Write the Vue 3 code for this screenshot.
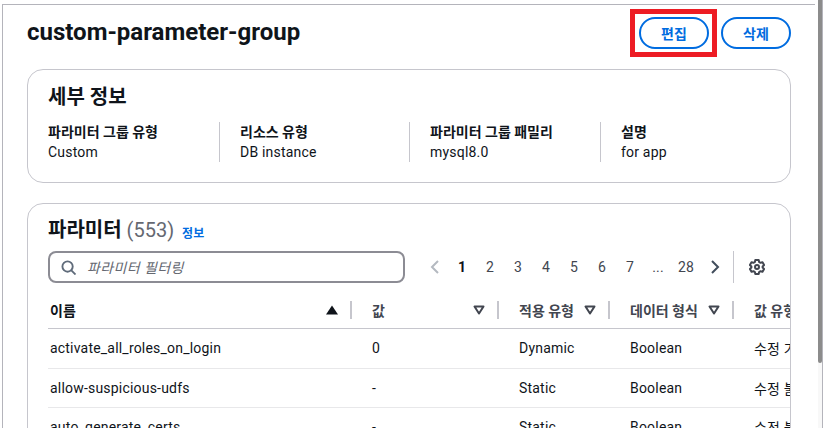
<script setup>
const stats = [
  { label: '파라미터 그룹 유형', value: 'Custom' },
  { label: '리소스 유형', value: 'DB instance' },
  { label: '파라미터 그룹 패밀리', value: 'mysql8.0' },
  { label: '설명', value: 'for app' },
]
const pages = ['2', '3', '4', '5', '6', '7', '...', '28']
const rows = [
  ['activate_all_roles_on_login', '0', 'Dynamic', 'Boolean', '수정 가능'],
  ['allow-suspicious-udfs', '-', 'Static', 'Boolean', '수정 불가'],
  ['auto_generate_certs', '-', 'Static', 'Boolean', '수정 불가'],
]
const cols = [
  { label: '값', cls: 'c2' },
  { label: '적용 유형', cls: 'c3' },
  { label: '데이터 형식', cls: 'c4' },
]
</script>

<template>
  <div class="page">
    <main class="content">
      <header class="head">
        <h1 class="title">custom-parameter-group</h1>
        <div class="actions">
          <button class="btn marked">편집</button>
          <button class="btn">삭제</button>
        </div>
      </header>

      <section class="card details">
        <h2 class="h2">세부 정보</h2>
        <div class="stats">
          <div v-for="s in stats" :key="s.label" class="stat">
            <div class="stat-label">{{ s.label }}</div>
            <div class="stat-value">{{ s.value }}</div>
          </div>
        </div>
      </section>

      <section class="card params">
        <div class="params-head">
          <h2 class="h2 params-title">파라미터 <span class="count">(553)</span></h2>
          <a class="info">정보</a>
        </div>
        <div class="tools">
          <div class="search">
            <svg class="search-icon" viewBox="0 0 16 16" width="15" height="15" fill="none" stroke="#5f6b7a" stroke-width="2">
              <circle cx="7" cy="7" r="5.5" />
              <path d="M10.8 10.8 15.5 15.5" />
            </svg>
            <span class="placeholder">파라미터 필터링</span>
          </div>
          <nav class="pager">
            <svg class="chev" viewBox="0 0 16 16" width="16" height="16" fill="none" stroke="#b4b9c0" stroke-width="2"><path d="M11 2 5 8l6 6" /></svg>
            <span class="page-num current">1</span>
            <span v-for="p in pages" :key="p" class="page-num">{{ p }}</span>
            <svg class="chev next" viewBox="0 0 16 16" width="16" height="16" fill="none" stroke="#414d5c" stroke-width="2"><path d="M5 2l6 6-6 6" /></svg>
          </nav>
          <div class="gear-wrap">
            <svg viewBox="0 0 16 16" width="16" height="16" fill="none" stroke="#424650" stroke-width="2" stroke-linejoin="round">
              <path d="M6.3 1h3.4l.4 2 1.4.8 2-.6 1.6 2.8-1.5 1.4v1.2l1.5 1.4-1.6 2.8-2-.6-1.4.8-.4 2H6.3l-.4-2-1.4-.8-2 .6L.9 10l1.5-1.4V7.4L.9 6l1.6-2.8 2 .6 1.4-.8z" />
              <circle cx="8" cy="8" r="2" />
            </svg>
          </div>
        </div>

        <div class="table">
          <div class="tr th-row">
            <div class="th c1">
              <span class="th-name">이름</span>
              <svg class="sort" viewBox="0 0 12 10" width="12" height="10"><path d="M6 .5 12 9.5H0z" fill="#0f141a" /></svg>
            </div>
            <div v-for="c in cols" :key="c.label" class="th" :class="c.cls">
              <span class="th-name muted">{{ c.label }}</span>
              <svg class="sort" viewBox="0 0 12 10" width="12" height="10"><path d="M1.5 1.5h9L6 8.5z" fill="none" stroke="#424650" stroke-width="2" stroke-linejoin="round" /></svg>
            </div>
            <div class="th c5"><span class="th-name muted nowrap">값 유형</span></div>
          </div>
          <div v-for="r in rows" :key="r[0]" class="tr td-row">
            <div class="td c1">{{ r[0] }}</div>
            <div class="td c2">{{ r[1] }}</div>
            <div class="td c3">{{ r[2] }}</div>
            <div class="td c4">{{ r[3] }}</div>
            <div class="td c5 nowrap">{{ r[4] }}</div>
          </div>
        </div>
      </section>
    </main>
    <aside class="scrollbar"><div class="thumb"></div></aside>
  </div>
</template>

<style>
html, body { margin: 0; background: #fff; }
</style>

<style scoped>
* { box-sizing: border-box; }
.page {
  width: 823px;
  height: 428px;
  overflow: hidden;
  display: flex;
  background: #fff;
  font-family: Roboto, "Noto Sans CJK KR", sans-serif;
  font-size: 14px;
  letter-spacing: 0.2px;
  color: #0f141a;
}
.content {
  width: 813px;
  height: 428px;
  margin-top: 4px;
  margin-left: 2px;
  margin-right: 3px;
  padding: 0 24px;
  border-top: 1px solid #b4b4bb;
  border-left: 1px solid #b4b4bb;
  overflow: hidden;
  flex: none;
}
.head {
  height: 64px;
  padding-top: 12px;
  display: flex;
  justify-content: space-between;
  align-items: flex-start;
}
.title { margin: 0; font-size: 24px; line-height: 30px; font-weight: 700; letter-spacing: 0; }
.actions { display: flex; gap: 12px; }
.btn {
  width: 70px;
  height: 32px;
  border: 2px solid #006ce0;
  border-radius: 16px;
  background: #fff;
  color: #006ce0;
  font: 700 14px Roboto, "Noto Sans CJK KR", sans-serif;
  padding: 0;
}
.marked { position: relative; }
.marked::after {
  content: "";
  position: absolute;
  left: -11px;
  right: -10px;
  top: -10px;
  bottom: -10px;
  border: 5px solid #ed1c24;
}
.card {
  border: 1px solid #c6c6cd;
  border-radius: 16px;
  background: #fff;
  width: 764px;
}
.details { height: 114px; padding: 13px 20px 0; margin-bottom: 20px; }
.h2 { margin: 0; font-size: 20px; line-height: 28px; font-weight: 700; letter-spacing: 0; }
.stats { display: grid; grid-template-columns: 171px 190px 191px 1fr; margin-top: 11px; }
.stat { border-left: 1px solid #c6c6cd; padding-left: 20px; height: 40px; }
.stat:first-child { border-left: 0; padding-left: 0; }
.stat-label { font-weight: 700; line-height: 20px; letter-spacing: 0; }
.stat-value { line-height: 20px; }
.params { padding: 12px 0 0 20px; height: 300px; overflow: hidden; }
.params-head { display: flex; align-items: center; gap: 8px; height: 28px; }
.count { font-weight: 400; color: #656871; }
.info { font-size: 12px; font-weight: 700; color: #006ce0; margin-top: 4px; letter-spacing: 0; }
.tools { display: flex; align-items: center; margin-top: 7px; height: 32px; }
.search {
  width: 357px;
  height: 32px;
  border: 2px solid #8c8c94;
  border-radius: 8px;
  display: flex;
  align-items: center;
  padding-left: 11px;
  gap: 11px;
}
.placeholder { font-style: italic; color: #656871; letter-spacing: 0.4px; }
.pager { display: flex; align-items: center; margin-left: 22px; }
.chev { margin-right: 5px; }
.chev.next { margin-right: 0; margin-left: 7px; }
.page-num { width: 28px; text-align: center; color: #424650; }
.current { font-weight: 700; color: #0f141a; }
.gear-wrap {
  margin-left: 10px;
  height: 32px;
  border-left: 1px solid #c6c6cd;
  padding-left: 15px;
  display: flex;
  align-items: center;
}
.table { margin-top: 8px; width: 743px; }
.tr { display: grid; grid-template-columns: 304px 147px 111px 124px 120px; }
.th-row { height: 38px; border-bottom: 1px solid #c6c6cd; align-items: center; width: 743px; overflow: hidden; }
.td-row { height: 39.5px; border-bottom: 1px solid #e8e8ea; align-items: center; width: 743px; overflow: hidden; }
.th {
  display: flex;
  align-items: center;
  justify-content: space-between;
  height: 18px;
  padding: 0 12px 0 20px;
  border-right: 2px solid #c6c6cd;
  font-weight: 700;
  letter-spacing: 0;
}
.th.c1 { padding-left: 2px; }
.th.c5 { border-right: 0; }
.td { padding-left: 20px; white-space: nowrap; overflow: hidden; }
.td.c1 { padding-left: 2px; }
.muted { color: #424650; }
.nowrap { white-space: nowrap; }
.scrollbar { width: 5px; height: 428px; background: #f8f8f8; border-right: 1px solid #b4b4bb; flex: none; }
.thumb { height: 363px; background: #8c8c8c; border-radius: 0 0 2px 2px; }
</style>
